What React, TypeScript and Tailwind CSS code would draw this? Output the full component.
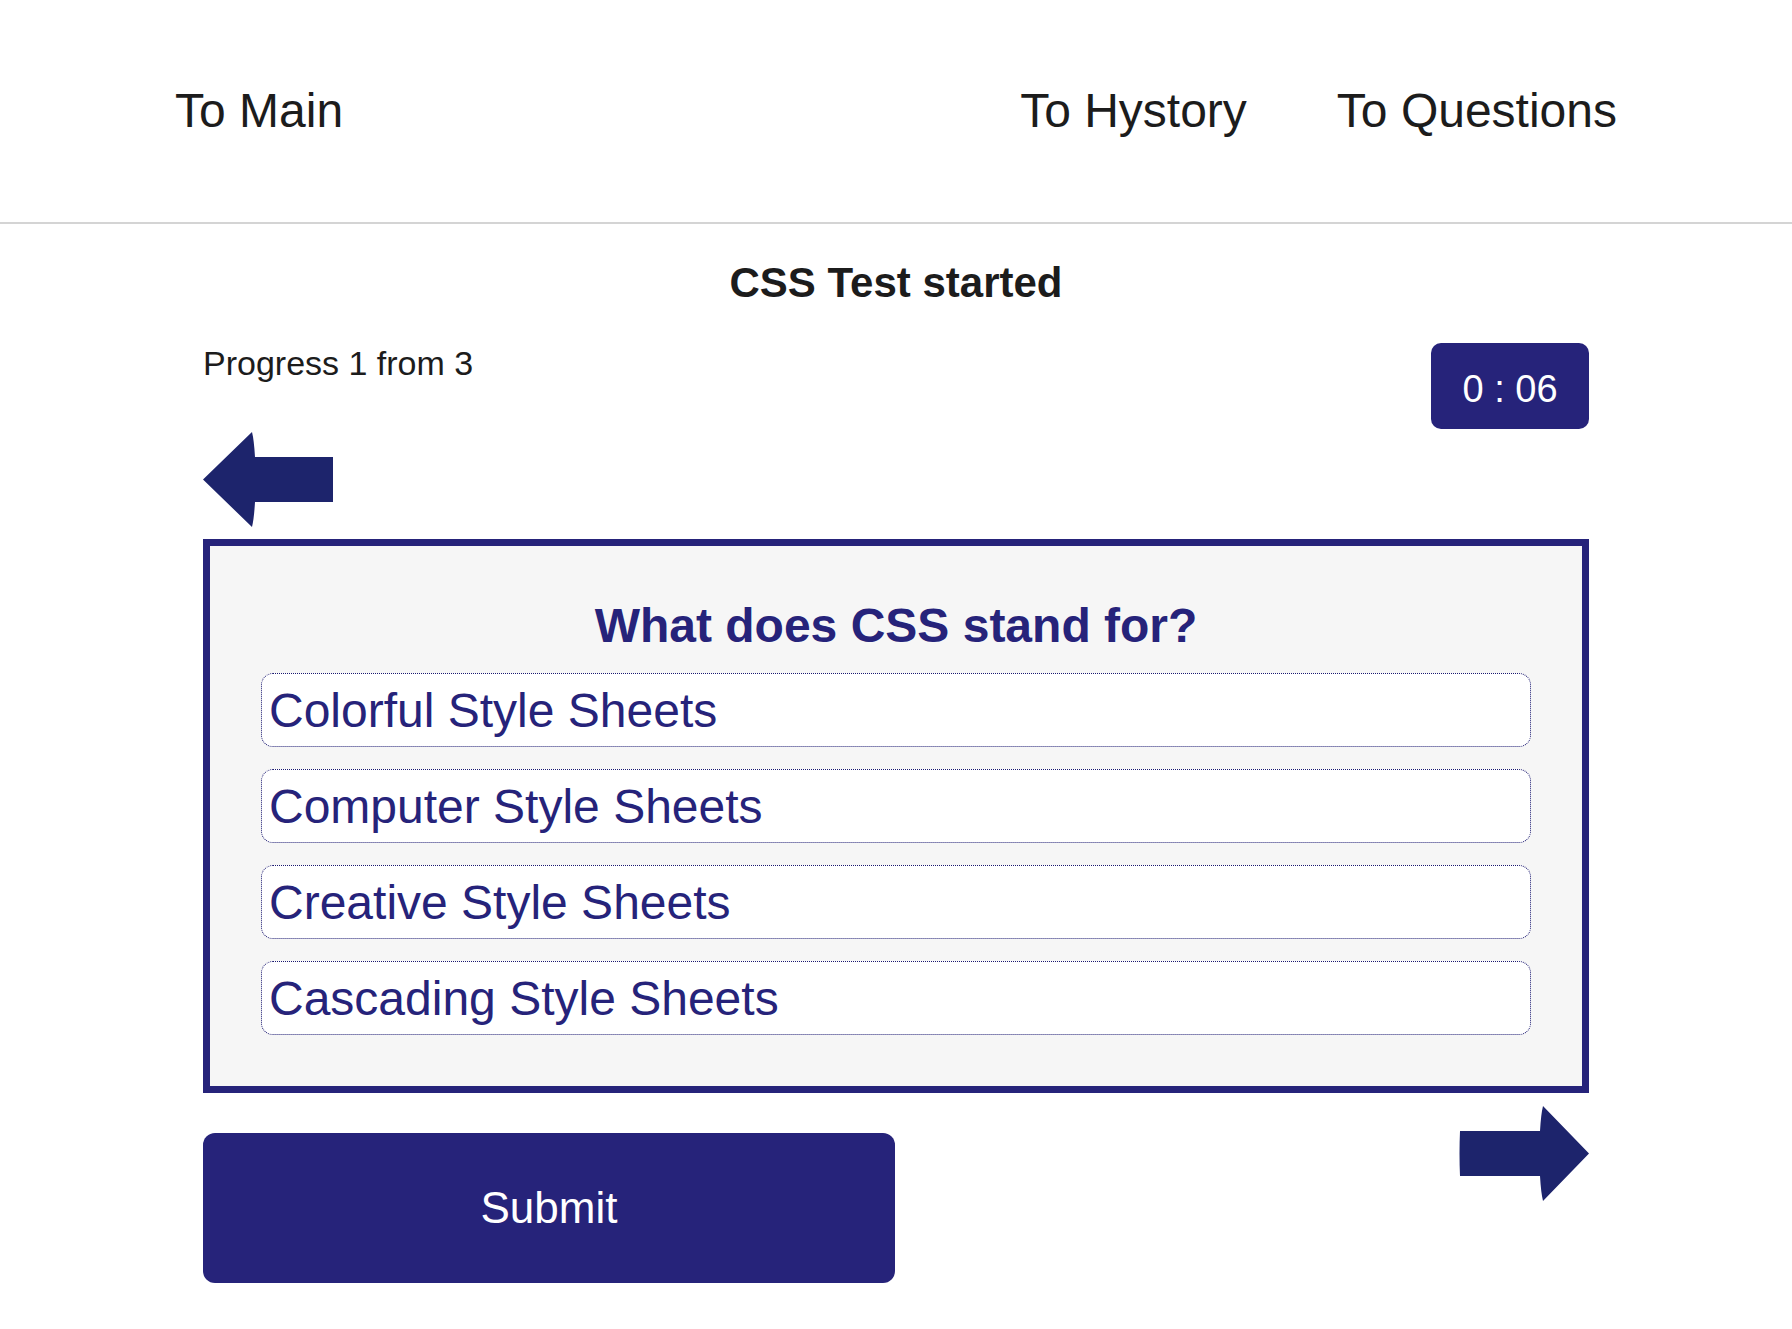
import React from "react";

const options = [
  "Colorful Style Sheets",
  "Computer Style Sheets",
  "Creative Style Sheets",
  "Cascading Style Sheets",
];

function LeftArrow() {
  return (
    <svg width="130" height="95" viewBox="0 0 130 95" className="block">
      <path d="M0 47.5 L49 0 Q51 8 52 25 L130 25 L130 70 L52 70 Q51 87 49 95 Z" fill="#1d246c" />
    </svg>
  );
}

function RightArrow() {
  return (
    <svg width="130" height="97" viewBox="0 0 130 97" className="block">
      <path d="M130 48.5 L84 1 Q82 9 81 26 L1 26 Q0 48.5 1 71 L81 71 Q82 88 84 96 Z" fill="#1d246c" />
    </svg>
  );
}

export default function App() {
  return (
    <div className="min-h-[1329px] bg-white font-['Liberation_Sans',Arial,sans-serif] text-[#1c1c1c]">
      <header className="flex h-[224px] items-center justify-between border-b-2 border-[#d4d4d4] px-[175px] pb-[2px]">
        <a className="text-[48px] leading-[55px]">To Main</a>
        <nav className="flex gap-[90px]">
          <a className="text-[48px] leading-[55px]">To Hystory</a>
          <a className="text-[48px] leading-[55px]">To Questions</a>
        </nav>
      </header>

      <main className="mx-auto w-[1386px]">
        <h1 className="mt-[35px] text-center text-[42px] font-bold leading-[47px]">CSS Test started</h1>

        <div className="mt-[37px] flex items-start justify-between">
          <p className="text-[34px] leading-[40px]">Progress 1 from 3</p>
          <div className="flex h-[86px] w-[158px] items-center justify-center rounded-[10px] bg-[#26237a] pt-[6px] text-[38px] leading-[42px] text-white">
            0 : 06
          </div>
        </div>

        <div className="mt-[3px]">
          <LeftArrow />
        </div>

        <section className="mt-[12px] flex flex-col gap-[22px] border-[7px] border-[#26237a] bg-[#f6f6f6] px-[51px] pb-[51px] pt-[52px]">
          <h2 className="mb-[-2px] text-center text-[48px] font-bold leading-[55px] text-[#26237a]">
            What does CSS stand for?
          </h2>
          {options.map((opt) => (
            <div
              key={opt}
              className="flex h-[74px] items-center rounded-[12px] border border-dotted border-[#1a1870] bg-white pl-[7px] text-[48px] leading-[55px] text-[#26237a]"
            >
              {opt}
            </div>
          ))}
        </section>

        <div className="mt-[12px] flex items-start justify-between">
          <button className="mt-[28px] flex h-[150px] w-[692px] items-center justify-center rounded-[12px] bg-[#26237a] text-[44px] leading-[50px] text-white">
            Submit
          </button>
          <RightArrow />
        </div>
      </main>
    </div>
  );
}
